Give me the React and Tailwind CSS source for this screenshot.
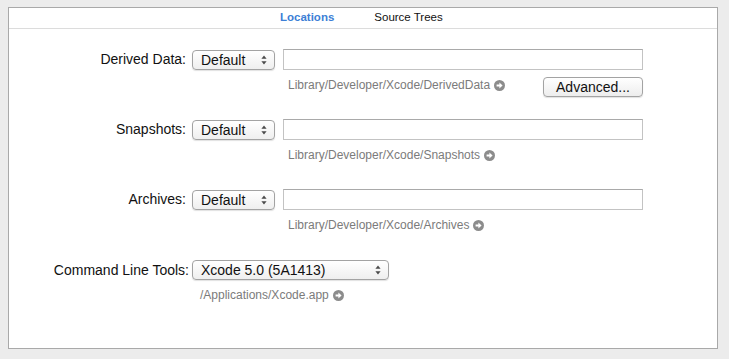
import React from "react";

const filas = [
  { rotulo: "Derived Data:", caminho: "Library/Developer/Xcode/DerivedData", avancado: true },
  { rotulo: "Snapshots:", caminho: "Library/Developer/Xcode/Snapshots" },
  { rotulo: "Archives:", caminho: "Library/Developer/Xcode/Archives" }
];

function Setas() {
  return (
    <svg width="6" height="10" viewBox="0 0 6 10" className="shrink-0">
      <path d="M3 0.5 L5.6 3.8 H0.4 Z" fill="#4a4a4a" />
      <path d="M3 9.5 L5.6 6.2 H0.4 Z" fill="#4a4a4a" />
    </svg>
  );
}

function Seletor({ texto, largura }) {
  return (
    <div
      className={`${largura} flex h-[20px] items-center justify-between rounded-[4px] border border-[#a3a3a3] bg-gradient-to-b from-white to-[#efefef] pl-[8px] pr-[7px] shadow-[0_1px_1px_rgba(0,0,0,0.12)]`}
    >
      <span className="text-[14px] leading-none text-[#111]">{texto}</span>
      <Setas />
    </div>
  );
}

function Seta() {
  return (
    <svg width="11" height="11" viewBox="0 0 11 11" className="ml-[4px] shrink-0">
      <circle cx="5.5" cy="5.5" r="5.5" fill="#8c8c8c" />
      <path d="M2.6 4.4 H5.4 V2.4 L8.6 5.5 L5.4 8.6 V6.6 H2.6 Z" fill="#fff" />
    </svg>
  );
}

function Caminho({ texto }) {
  return (
    <div className="flex items-center text-[12px] leading-none text-[#7b7b7b]">
      <span>{texto}</span>
      <Seta />
    </div>
  );
}

export default function App() {
  return (
    <div
      className="h-[359px] w-[729px] bg-[#ececec] pl-[8px] pt-[7px]"
      style={{ fontFamily: '"Liberation Sans", Arial, sans-serif' }}
    >
      <div className="h-[342px] w-[710px] border border-[#a9a9a9] bg-white">
        <div className="flex h-[21px] items-center border-b border-[#dcdcdc] pl-[271px] text-[11.5px]">
          <span className="font-bold text-[#3d7fd6]">Locations</span>
          <span className="ml-[40px] text-[#111]">Source Trees</span>
        </div>

        <div className="pt-[20px]">
          {filas.map((fila) => (
            <div key={fila.rotulo} className="h-[70px]">
              <div className="flex h-[21px] items-center">
                <span className="w-[177px] text-right text-[14px] text-[#111]">{fila.rotulo}</span>
                <div className="ml-[6px]">
                  <Seletor texto="Default" largura="w-[83px]" />
                </div>
                <div className="ml-[8px] h-[21px] w-[360px] border border-[#c3c3c3] border-t-[#a9a9a9] bg-white" />
              </div>
              <div className="mt-[7px] flex h-[20px] items-start pl-[279px]">
                <div className="pt-[2px]">
                  <Caminho texto={fila.caminho} />
                </div>
                {fila.avancado && (
                  <div className="ml-auto mr-[74px] flex h-[20px] w-[100px] items-center justify-center rounded-[4px] border border-[#a3a3a3] bg-gradient-to-b from-white to-[#ededed] text-[14px] text-[#111] shadow-[0_1px_1px_rgba(0,0,0,0.12)]">
                    Advanced...
                  </div>
                )}
              </div>
            </div>
          ))}

          <div className="pt-[1px]">
            <div className="flex h-[20px] items-center">
              <span className="w-[180px] text-right text-[14px] text-[#111]">Command Line Tools:</span>
              <div className="ml-[3px]">
                <Seletor texto="Xcode 5.0 (5A1413)" largura="w-[197px]" />
              </div>
            </div>
            <div className="mt-[9px] pl-[191px]">
              <Caminho texto="/Applications/Xcode.app" />
            </div>
          </div>
        </div>
      </div>
    </div>
  );
}
